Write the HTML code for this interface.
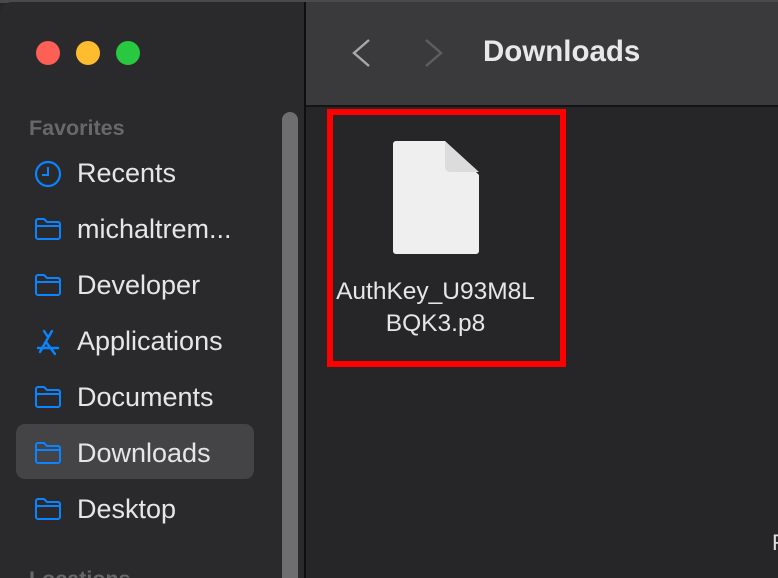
<!DOCTYPE html>
<html><head><meta charset="utf-8"><style>
html,body{margin:0;padding:0;width:778px;height:578px;overflow:hidden;background:#262628;font-family:"Liberation Sans",sans-serif;position:relative;}
.abs{position:absolute;}
#side{left:0;top:2px;width:304px;height:576px;background:#2a2a2c;border-top-left-radius:12px;}
#topline{left:0;top:0;width:778px;height:3px;background:#4a4a4c;}
#sep{left:304px;top:2px;width:2px;height:576px;background:#0e0e0e;}
#tool{left:306px;top:2px;width:472px;height:103px;background:#3a3a3c;}
#toolline{left:306px;top:105px;width:472px;height:2px;background:#141414;}
.dot{width:24px;height:24px;border-radius:50%;top:41px;}
.item{left:77px;font-size:27px;color:#e6e6e6;line-height:30px;}
.ic{left:34px;}
</style></head><body>
<div class="abs" id="topline"></div>
<div class="abs" id="side"></div>
<div class="abs" id="sep"></div>
<div class="abs" id="tool"></div>
<div class="abs" id="toolline"></div>
<div class="abs dot" style="left:36px;background:#fe5f57"></div>
<div class="abs dot" style="left:76px;background:#febc2e"></div>
<div class="abs dot" style="left:116px;background:#28c840"></div>
<div class="abs" style="left:282px;top:112px;width:16px;height:466px;border-radius:8px 8px 0 0;background:#6e6e70"></div>
<div class="abs" style="left:29px;top:116px;font-size:21.5px;font-weight:bold;color:#68686a">Favorites</div>
<div class="abs" style="left:16px;top:424px;width:238px;height:55px;border-radius:9px;background:#444446"></div>

<svg class="abs ic" style="top:160px" width="28" height="28" viewBox="0 0 28 28"><circle cx="14" cy="14" r="12" fill="none" stroke="#0a84ff" stroke-width="2.2"/><path d="M14 7v8h-6" fill="none" stroke="#0a84ff" stroke-width="2"/></svg>
<div class="abs item" style="top:158px">Recents</div>

<svg width="0" height="0" style="position:absolute"><defs><symbol id="fold" viewBox="0 0 28 24"><path d="M2 4a2 2 0 0 1 2-2h6l3 3h11a2 2 0 0 1 2 2v13a2 2 0 0 1-2 2H4a2 2 0 0 1-2-2zM2 9h24" fill="none" stroke="#0a84ff" stroke-width="2"/></symbol></defs></svg>
<svg class="abs ic" style="top:217px" width="28" height="24"><use href="#fold"/></svg>
<div class="abs item" style="top:214px">michaltrem...</div>
<svg class="abs ic" style="top:273px" width="28" height="24"><use href="#fold"/></svg>
<div class="abs item" style="top:270px">Developer</div>
<svg class="abs ic" style="top:328px" width="28" height="28" viewBox="0 0 28 28"><path d="M10 3l4 6M18 3L7 22M12 14L21 26M4 20h20M6 24l2-3" fill="none" stroke="#0a84ff" stroke-width="2.4" stroke-linecap="round"/></svg>
<div class="abs item" style="top:326px">Applications</div>
<svg class="abs ic" style="top:385px" width="28" height="24"><use href="#fold"/></svg>
<div class="abs item" style="top:382px">Documents</div>
<svg class="abs ic" style="top:441px" width="28" height="24"><use href="#fold"/></svg>
<div class="abs item" style="top:438px">Downloads</div>
<svg class="abs ic" style="top:497px" width="28" height="24"><use href="#fold"/></svg>
<div class="abs item" style="top:494px">Desktop</div>
<div class="abs" style="left:29px;top:566px;height:12px;overflow:hidden;font-size:21.5px;font-weight:bold;color:#68686a;line-height:26px">Locations</div>

<svg class="abs" style="left:350px;top:38px" width="22" height="30"><path d="M19 2L4 15l15 13" fill="none" stroke="#a8a8aa" stroke-width="2.4"/></svg>
<svg class="abs" style="left:422px;top:38px" width="22" height="30"><path d="M4 2l15 13L4 28" fill="none" stroke="#5e5e60" stroke-width="2.4"/></svg>
<div class="abs" style="left:483px;top:35px;font-size:29.5px;font-weight:bold;color:#e8e8e8">Downloads</div>

<div class="abs" style="left:327px;top:109px;width:227px;height:246px;border:6px solid #ff0000"></div>
<svg class="abs" style="left:392px;top:140px" width="90" height="116" viewBox="0 0 90 116"><path d="M4 1h49l34 34v76a3 3 0 0 1-3 3H4a3 3 0 0 1-3-3V4a3 3 0 0 1 3-3z" fill="#efefef"/><path d="M53 1v26a5 5 0 0 0 5 5h29z" fill="#dcdcdc"/></svg>
<div class="abs" style="left:296px;top:276px;width:279px;text-align:center;font-size:24.5px;color:#e6e6e6;line-height:32px">AuthKey_U93M8L<br>BQK3.p8</div>
<div class="abs" style="left:772px;top:530px;font-size:22px;color:#ddd">F</div>
</body></html>
